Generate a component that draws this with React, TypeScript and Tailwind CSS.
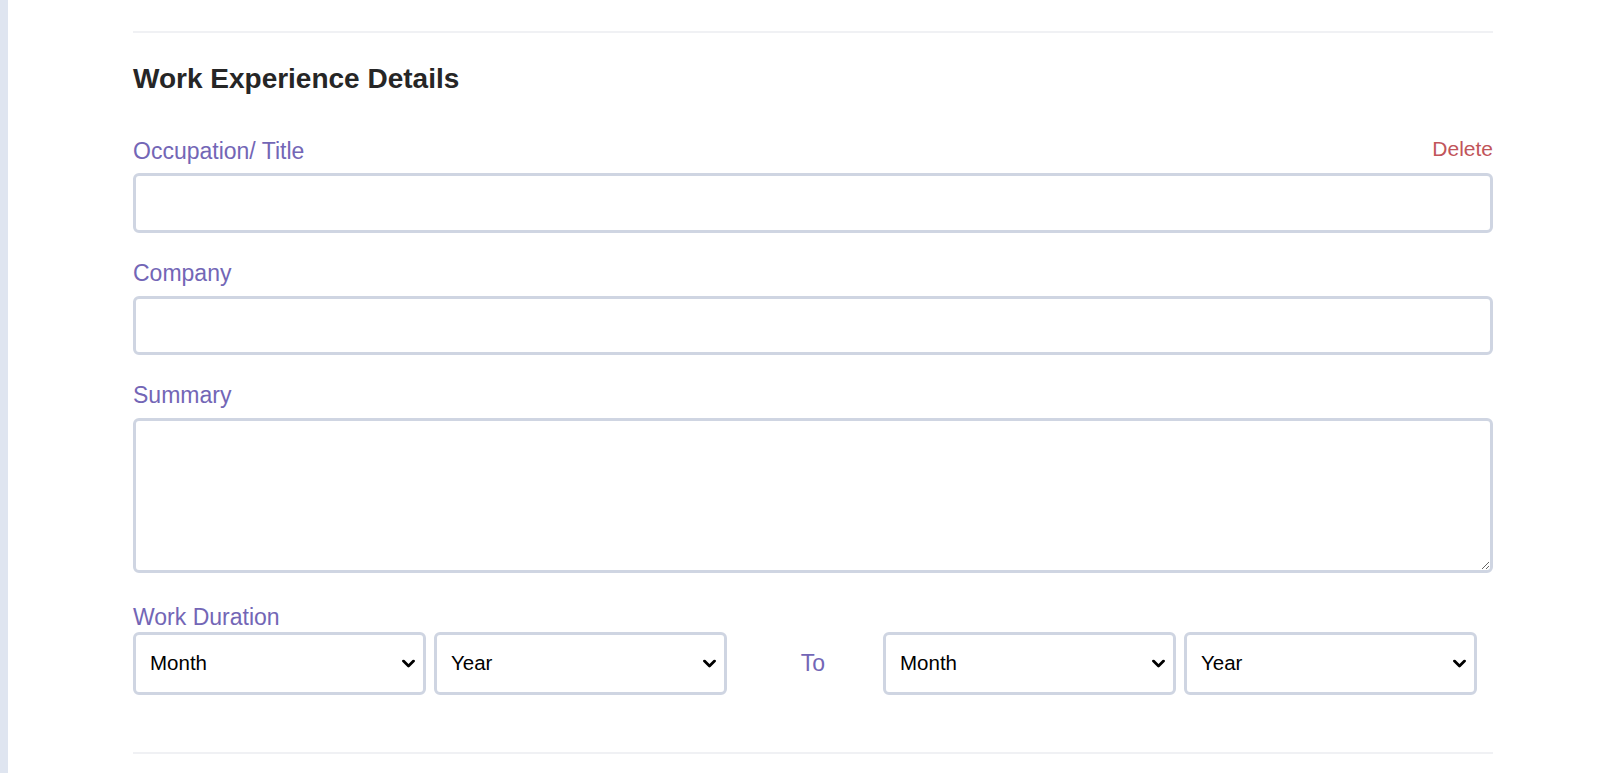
import React from "react";

const labelCls = "block text-[23px] leading-[28px] text-[#7366b6]";
const fieldCls =
  "block w-full bg-white border-[3px] border-[#cfd5e2] rounded-[6px] outline-none";

const Chevron = () => (
  <svg
    width="13"
    height="9"
    viewBox="0 0 13 9"
    className="pointer-events-none absolute right-[11px] top-1/2 -translate-y-1/2"
  >
    <path
      d="M1.5 1.5 L6.5 6.5 L11.5 1.5"
      fill="none"
      stroke="#000"
      strokeWidth="2.8"
      strokeLinecap="round"
      strokeLinejoin="round"
    />
  </svg>
);

const Select: React.FC<{ placeholder: string }> = ({ placeholder }) => (
  <div className="relative w-[293px] shrink-0">
    <select
      className="block w-full h-[63px] appearance-none bg-white border-[3px] border-[#cfd5e2] rounded-[6px] pl-[14px] pr-8 text-[20.5px] text-black outline-none"
      defaultValue=""
    >
      <option value="">{placeholder}</option>
    </select>
    <Chevron />
  </div>
);

export default function App() {
  return (
    <div
      className="flex min-h-[773px] bg-white"
      style={{ fontFamily: '"Liberation Sans", Arial, sans-serif' }}
    >
      <div className="w-[8px] shrink-0 bg-[#dfe5f0]" />
      <div className="ml-[125px] w-[1360px] pt-[31px]">
        <div className="border-t-2 border-[#f0f1f4]" />

        <h2 className="mt-[30px] text-[28px] leading-[32px] font-bold text-[#262626]">
          Work Experience Details
        </h2>

        <div className="mt-[42px] flex items-center justify-between">
          <label className={labelCls}>Occupation/ Title</label>
          <button className="mb-[4px] text-[21px] leading-[24px] text-[#c1555a]">
            Delete
          </button>
        </div>
        <input className={`${fieldCls} mt-[8px] h-[60px] px-3 text-[20px]`} />

        <label className={`${labelCls} mt-[26px]`}>Company</label>
        <input className={`${fieldCls} mt-[9px] h-[59px] px-3 text-[20px]`} />

        <label className={`${labelCls} mt-[26px]`}>Summary</label>
        <textarea className={`${fieldCls} mt-[9px] h-[155px] p-3 text-[20px]`} />

        <label className={`${labelCls} mt-[30px]`}>Work Duration</label>
        <div className="mt-[1px] flex items-center">
          <Select placeholder="Month" />
          <div className="ml-[8px]">
            <Select placeholder="Year" />
          </div>
          <div className="w-[156px] shrink-0 pl-[16px] text-center text-[23px] text-[#7366b6]">
            To
          </div>
          <Select placeholder="Month" />
          <div className="ml-[8px]">
            <Select placeholder="Year" />
          </div>
        </div>

        <div className="mt-[57px] border-t-2 border-[#f0f1f4]" />
      </div>
    </div>
  );
}
